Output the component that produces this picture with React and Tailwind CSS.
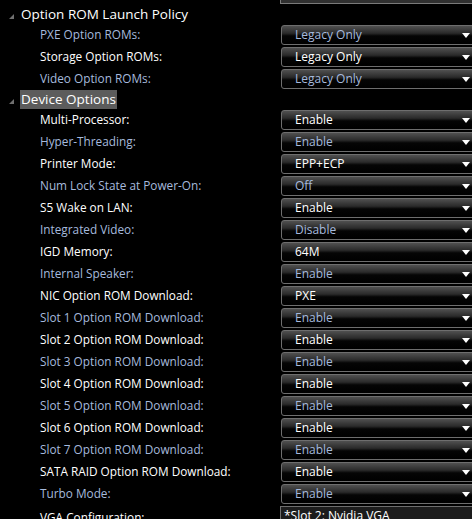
import React from "react";

const WHITE = "text-white";
const DIM = "text-[#a6badd]";

const items = [
  ["Multi-Processor:", "Enable", true],
  ["Hyper-Threading:", "Enable", false],
  ["Printer Mode:", "EPP+ECP", true],
  ["Num Lock State at Power-On:", "Off", false],
  ["S5 Wake on LAN:", "Enable", true],
  ["Integrated Video:", "Disable", false],
  ["IGD Memory:", "64M", true],
  ["Internal Speaker:", "Enable", false],
  ["NIC Option ROM Download:", "PXE", true],
  ["Slot 1 Option ROM Download:", "Enable", false],
  ["Slot 2 Option ROM Download:", "Enable", true],
  ["Slot 3 Option ROM Download:", "Enable", false],
  ["Slot 4 Option ROM Download:", "Enable", true],
  ["Slot 5 Option ROM Download:", "Enable", false],
  ["Slot 6 Option ROM Download:", "Enable", true],
  ["Slot 7 Option ROM Download:", "Enable", false],
  ["SATA RAID Option ROM Download:", "Enable", true],
  ["Turbo Mode:", "Enable", false],
];

function Arrow() {
  return (
    <svg width="8" height="5" viewBox="0 0 8 5" className="shrink-0">
      <polygon points="0,0 8,0 4,5" fill="#ffffff" />
    </svg>
  );
}

function TreeArrow() {
  return (
    <svg width="5" height="5" viewBox="0 0 5 5" className="shrink-0">
      <polygon points="5,0 5,5 0,5" fill="#6f6f6f" />
    </svg>
  );
}

function Row({ label, value, enabled }) {
  const color = enabled ? WHITE : DIM;
  return (
    <div className="flex h-[22px] items-center">
      <div className={`w-[281px] shrink-0 pl-[40px] text-[11.8px] leading-none ${color}`}>{label}</div>
      <div className="flex h-[20px] w-[200px] shrink-0 items-center rounded-l-[3px] border border-[#6e6e6e] bg-[linear-gradient(to_bottom,#505050_0%,#2a2a2a_40%,#050505_55%,#000000_100%)] pr-[10px]">
        <span className={`flex-1 pl-[13px] text-[12px] leading-none ${color}`}>{value}</span>
        <Arrow />
      </div>
    </div>
  );
}

function Heading({ text, selected }) {
  return (
    <div className="flex h-[19px] items-center">
      <div className="flex w-[20px] shrink-0 justify-end pr-[6px] pt-[3px]">
        <TreeArrow />
      </div>
      <div className={`flex h-[19px] items-center px-[1px] text-[13.5px] leading-none text-white ${selected ? "bg-[#5c5c5c]" : ""}`}>
        {text}
      </div>
    </div>
  );
}

export default function App() {
  return (
    <div className="h-[519px] w-[472px] overflow-hidden bg-black font-['Open_Sans','Noto_Sans',sans-serif]">
      <div className="-mt-[17px] flex flex-col">
        <div className="flex h-[22px] items-start">
          <div className="w-[280px] shrink-0 pl-[40px] pt-[2px] text-[11.8px] leading-none text-white">Legacy Boot Policy:</div>
          <div className="mt-[1px] h-[20px] w-[200px] shrink-0 border border-[#7a7a7a] bg-[#303030]" />
        </div>
        <Heading text="Option ROM Launch Policy" />
        <Row label="PXE Option ROMs:" value="Legacy Only" enabled={false} />
        <Row label="Storage Option ROMs:" value="Legacy Only" enabled={true} />
        <Row label="Video Option ROMs:" value="Legacy Only" enabled={false} />
        <Heading text="Device Options" selected />
        {items.map(([l, v, e]) => (
          <Row key={l} label={l} value={v} enabled={e} />
        ))}
        <div className="flex h-[22px] items-start pt-[1px]">
          <div className="w-[280px] shrink-0 pl-[40px] pt-[6px] text-[11.8px] leading-none text-white">VGA Configuration:</div>
          <div className="h-[30px] w-[200px] shrink-0 border border-[#6e6e6e] bg-[#1c1c1c] pl-[3px] pt-[3px] text-[12px] leading-none text-white">
            *Slot 2: Nvidia VGA
          </div>
        </div>
      </div>
    </div>
  );
}
